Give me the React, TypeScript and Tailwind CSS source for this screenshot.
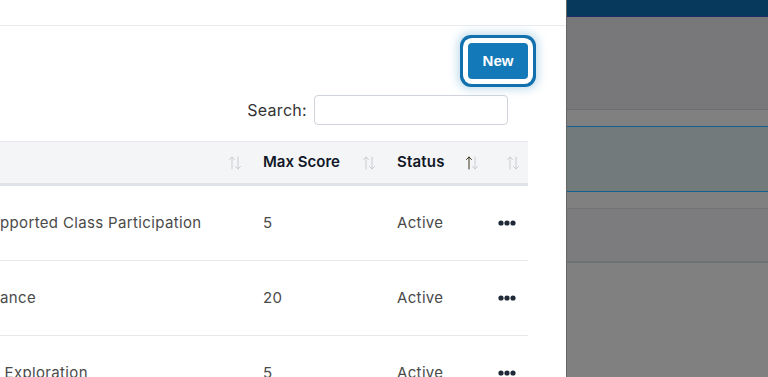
import React from "react";

const SortIcon = ({ active = false }: { active?: boolean }) => (
  <svg width="14" height="16" viewBox="0 0 14 16" className="shrink-0">
    <g fill="none" strokeWidth="1" strokeLinecap="round" strokeLinejoin="round">
      <path d="M4 14V2M1.5 4.5L4 2l2.5 2.5" stroke={active ? "#3a3320" : "#c9ccd1"} />
      <path d="M10 2v12M7.5 11.5L10 14l2.5-2.5" stroke="#c9ccd1" />
    </g>
  </svg>
);

const Dots = () => (
  <svg width="18" height="6" viewBox="0 0 18 6">
    <circle cx="3" cy="3" r="2.6" fill="#1f2937" />
    <circle cx="9" cy="3" r="2.6" fill="#1f2937" />
    <circle cx="15" cy="3" r="2.6" fill="#1f2937" />
  </svg>
);

const rows = [
  { name: "pported Class Participation", score: "5", status: "Active" },
  { name: "ance", score: "20", status: "Active" },
  { name: " Exploration", score: "5", status: "Active" },
];

const App = () => {
  return (
    <div className="flex h-[377px] w-[768px] overflow-hidden bg-white font-['Inter',sans-serif]">
      <div className="flex w-[566px] shrink-0 flex-col">
        <div className="h-[26px] shrink-0 border-b border-[#e8eaed]" />

        <div className="flex justify-end pr-[38px] pt-[17px]">
          <button className="h-[36px] w-[60px] rounded-[4px] bg-[#1379b8] font-['Liberation_Sans',sans-serif] text-[15px] font-bold text-white shadow-[0_0_0_5px_#fff,0_0_0_8px_#1170ad,0_0_10px_10px_rgba(19,121,184,0.28)]">
            New
          </button>
        </div>

        <div className="mt-[16px] flex items-center justify-end gap-[7px] pr-[58px]">
          <span className="text-[16px] tracking-[0.3px] text-[#333]">Search:</span>
          <input className="h-[30px] w-[194px] rounded-[4px] border border-[#cfd4da] outline-none" />
        </div>

        <div className="mt-[16px] w-[528px]">
          <div className="flex h-[45px] items-stretch border-t border-b-[3px] border-t-[#e6e8eb] border-b-[#dfe2e6] bg-[#f4f5f7] text-[15px] font-semibold text-[#111827]">
            <div className="flex w-[251px] items-center justify-end pr-[9px]">
              <SortIcon />
            </div>
            <div className="flex w-[134px] items-center justify-between pl-[12px] pr-[9px]">
              <span>Max Score</span>
              <SortIcon />
            </div>
            <div className="flex w-[101px] items-center justify-between pl-[12px] pr-[7px]">
              <span className="tracking-[0.2px]">Status</span>
              <SortIcon active />
            </div>
            <div className="flex flex-1 items-center justify-end pr-[8px]">
              <SortIcon />
            </div>
          </div>

          {rows.map((r, i) => (
            <div
              key={i}
              className="flex h-[75px] items-center border-b border-[#e6e8eb] text-[15px] tracking-[0.35px] text-[#4a4a4a]"
            >
              <div className="w-[251px] whitespace-pre">{r.name}</div>
              <div className="w-[134px] pl-[12px]">{r.score}</div>
              <div className="w-[101px] pl-[12px]">{r.status}</div>
              <div className="flex flex-1 items-center pl-[12px]">
                <Dots />
              </div>
            </div>
          ))}
        </div>
      </div>

      <div className="flex flex-1 flex-col border-l border-[#666]">
        <div className="h-[17px] shrink-0 border-b border-[#1f2d63] bg-[#06395b]" />
        <div className="h-[93px] shrink-0 border-b border-[#6e6e71] bg-[#78787b]" />
        <div className="h-[17px] shrink-0 border-b border-[#0f5f90] bg-[#808080]" />
        <div className="h-[65px] shrink-0 border-b border-[#0f5f90] bg-[#727a7c]" />
        <div className="h-[17px] shrink-0 border-b border-[#737373] bg-[#808080]" />
        <div className="h-[54px] shrink-0 border-b-2 border-[#6f7274] bg-[#7c7c7e]" />
        <div className="flex-1 bg-[#808080]" />
      </div>
    </div>
  );
};

export default App;
